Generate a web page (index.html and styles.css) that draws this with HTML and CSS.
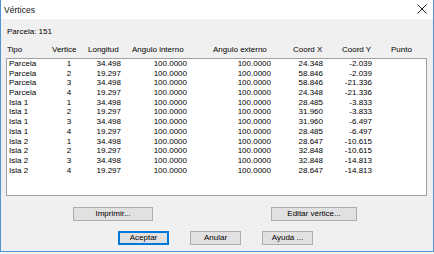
FILE: index.html
```html
<!DOCTYPE html>
<html lang="es">
<head>
    <meta charset="UTF-8">
    <title>Vértices</title>
    <link rel="stylesheet" href="styles.css">
</head>
<body>
    <div class="window">
        <div class="titlebar">
            <span class="title">Vértices</span>
            <svg class="close" width="10" height="10" viewBox="0 0 10 10">
                <path d="M0.5 0.5 L9.5 9.5 M9.5 0.5 L0.5 9.5" stroke="#222" stroke-width="1" fill="none"/>
            </svg>
        </div>
        <div class="content">
            <div class="parcel">Parcela: 151</div>
            <div class="head">
                <span>Tipo</span>
                <span>Vertice</span>
                <span>Longitud</span>
                <span>Angulo interno</span>
                <span>Angulo externo</span>
                <span>Coord X</span>
                <span>Coord Y</span>
                <span>Punto</span>
            </div>
            <div class="list" id="list"></div>
            <div class="actions">
                <button class="button print">Imprimir...</button>
                <button class="button edit">Editar vértice...</button>
            </div>
            <div class="footer">
                <button class="button default">Aceptar</button>
                <button class="button">Anular</button>
                <button class="button">Ayuda ...</button>
            </div>
        </div>
    </div>

    <script>
        const rows = [
            ["Parcela", 1, "34.498", "24.348", "-2.039"],
            ["Parcela", 2, "19.297", "58.846", "-2.039"],
            ["Parcela", 3, "34.498", "58.846", "-21.336"],
            ["Parcela", 4, "19.297", "24.348", "-21.336"],
            ["Isla 1", 1, "34.498", "28.485", "-3.833"],
            ["Isla 1", 2, "19.297", "31.960", "-3.833"],
            ["Isla 1", 3, "34.498", "31.960", "-6.497"],
            ["Isla 1", 4, "19.297", "28.485", "-6.497"],
            ["Isla 2", 1, "34.498", "28.647", "-10.615"],
            ["Isla 2", 2, "19.297", "32.848", "-10.615"],
            ["Isla 2", 3, "34.498", "32.848", "-14.813"],
            ["Isla 2", 4, "19.297", "28.647", "-14.813"]
        ];

        document.getElementById("list").innerHTML = rows.map(r => `
            <div class="row">
                <span class="tipo">${r[0]}</span>
                <span class="vert">${r[1]}</span>
                <span class="num">${r[2]}</span>
                <span class="num">100.0000</span>
                <span class="num">100.0000</span>
                <span class="num">${r[3]}</span>
                <span class="num">${r[4]}</span>
                <span></span>
            </div>`).join('');
    </script>
</body>
</html>
```

FILE: styles.css
```css
body {
    margin: 0;
    background: #f4f4f4;
    font-family: "Liberation Sans", Arial, sans-serif;
    font-size: 8px;
    color: #000;
}
.window {
    width: 432px;
    height: 251px;
    border: 1px solid #4f95d6;
    border-top: none;
    background: #f0f0f0;
    display: flex;
    flex-direction: column;
}
.titlebar {
    height: 19px;
    background: #fff;
    display: flex;
    align-items: center;
    justify-content: space-between;
    padding: 0 6px 0 3px;
}
.title {
    font-size: 8.6px;
    color: #111;
}
.close {
    margin-top: -1px;
}
.content {
    padding: 0 5px;
}
.parcel {
    margin: 8px 0 0 1px;
    line-height: 10px;
}
.head {
    margin-top: 8px;
    line-height: 10px;
    display: grid;
    grid-template-columns: 45px 36px 44px 81px 80px 49px 49px 1fr;
    padding-left: 1px;
}
.list {
    margin-top: 3px;
    width: 419px;
    height: 136px;
    background: #fff;
    border: 1px solid #a0a0a0;
}
.row {
    display: grid;
    grid-template-columns: 45px 34px 35px 66px 84px 52px 49px 1fr;
    line-height: 9.7px;
    height: 9.7px;
}
.tipo {
    padding-left: 2px;
}
.vert {
    text-align: center;
}
.num {
    text-align: right;
}
.button {
    font-family: "Liberation Sans", Arial, sans-serif;
    font-size: 8px;
    height: 14px;
    padding: 0;
    border: 1px solid #adadad;
    background: #e1e1e1;
    color: #000;
    line-height: 12px;
}
.default {
    border-color: #0078d7;
    box-shadow: inset 0 0 0 1px #0078d7;
}
.actions {
    margin-top: 11px;
    display: flex;
    padding-left: 67px;
}
.print {
    width: 80px;
}
.edit {
    width: 86px;
    margin-left: 118px;
}
.footer {
    margin-top: 10px;
    display: flex;
    gap: 21px;
    padding-left: 112px;
}
.footer .button {
    width: 51px;
}
```
